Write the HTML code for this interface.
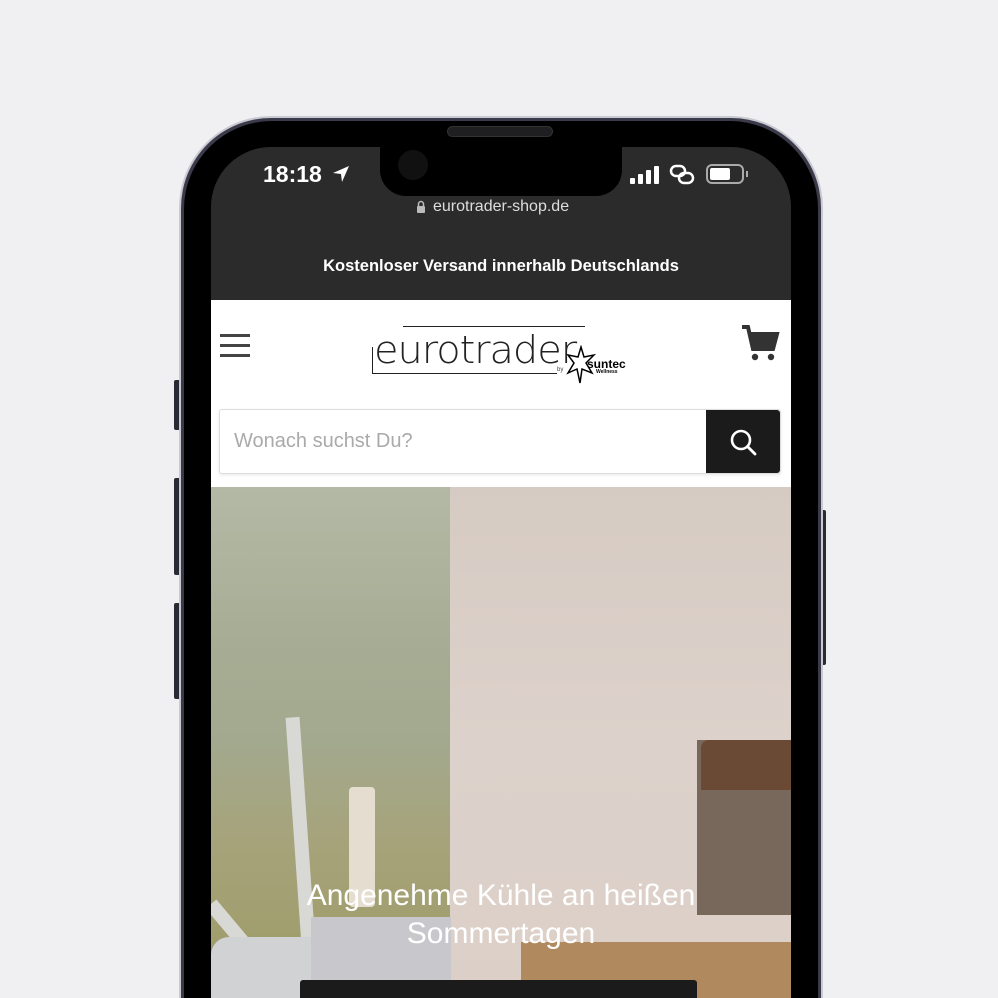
<!DOCTYPE html>
<html><head><meta charset="utf-8"><style>
*{margin:0;padding:0;box-sizing:border-box}
html,body{width:998px;height:998px;overflow:hidden}
body{background:#f0f0f2;font-family:"Liberation Sans",sans-serif}
#wrap{position:relative;width:998px;height:998px;overflow:hidden;background:#f0f0f2}
.abs{position:absolute}
</style></head><body><div id="wrap">
<div class="abs" style="left:174px;top:380px;width:8px;height:50px;background:#2a2a35;border-radius:2px"></div>
<div class="abs" style="left:174px;top:478px;width:8px;height:97px;background:#2a2a35;border-radius:2px"></div>
<div class="abs" style="left:174px;top:603px;width:8px;height:96px;background:#2a2a35;border-radius:2px"></div>
<div class="abs" style="left:818px;top:510px;width:8px;height:155px;background:#2a2a35;border-radius:2px"></div>
<div class="abs" style="left:179px;top:116px;width:644px;height:882px;border-radius:92px 92px 0 0;background:#3a3a4a;border:2px solid #c9c9d2;border-bottom:none"></div>
<div class="abs" style="left:184px;top:121px;width:634px;height:877px;border-radius:88px 88px 0 0;background:#000"></div>
<div class="abs" style="left:447px;top:126px;width:106px;height:11px;border-radius:6px;background:#1f1f22;border:1px solid #333"></div>
<div class="abs" style="left:211px;top:147px;width:580px;height:851px;border-radius:60px 60px 0 0;background:#2b2b2b;overflow:hidden">
  <div class="abs" style="left:169px;top:-2px;width:242px;height:51px;background:#000;border-radius:0 0 26px 26px"></div>
  <div class="abs" style="left:187px;top:3px;width:30px;height:30px;border-radius:50%;background:#111"></div>
  <div class="abs" style="left:52px;top:14px;color:#fff;font-size:23px;font-weight:bold">18:18</div>
  <svg class="abs" style="left:120px;top:17px" width="20" height="20" viewBox="0 0 20 20"><path d="M18 2 L2 9 L10 10 L11 18 Z" fill="#fff"/></svg>
  <svg class="abs" style="left:418px;top:18px" width="32" height="20" viewBox="0 0 32 20"><rect x="1" y="13" width="5" height="6" rx="1" fill="#fff"/><rect x="9" y="9" width="5" height="10" rx="1" fill="#fff"/><rect x="17" y="5" width="5" height="14" rx="1" fill="#fff"/><rect x="25" y="1" width="5" height="18" rx="1" fill="#fff"/></svg>
  <svg class="abs" style="left:457px;top:16px" width="28" height="24" viewBox="0 0 28 24"><rect x="3" y="3" width="14" height="10" rx="5" fill="none" stroke="#fff" stroke-width="2.5"/><rect x="11" y="10" width="14" height="10" rx="5" fill="none" stroke="#fff" stroke-width="2.5"/></svg>
  <div class="abs" style="left:495px;top:17px;width:38px;height:20px;border:2px solid #aaa;border-radius:6px"></div>
  <div class="abs" style="left:499px;top:21px;width:20px;height:12px;background:#fff;border-radius:2px"></div>
  <div class="abs" style="left:535px;top:24px;width:2px;height:6px;background:#aaa"></div>
  <svg class="abs" style="left:205px;top:53px" width="10" height="14" viewBox="0 0 10 14"><path d="M2.5 6V4a2.5 2.5 0 0 1 5 0v2" fill="none" stroke="#bbb" stroke-width="1.5"/><rect x="1" y="6" width="8" height="7" rx="1" fill="#bbb"/></svg>
  <div class="abs" style="left:222px;top:51px;color:#ddd;font-size:16px">eurotrader-shop.de</div>
  <div class="abs" style="left:0;top:110px;width:580px;text-align:center;color:#fff;font-size:16.5px;font-weight:bold">Kostenloser Versand innerhalb Deutschlands</div>
  <div class="abs" style="left:0;top:153px;width:580px;height:187px;background:#fff"></div>
  <div class="abs" style="left:9px;top:187px;width:30px;height:3px;background:#444"></div>
  <div class="abs" style="left:9px;top:197px;width:30px;height:3px;background:#444"></div>
  <div class="abs" style="left:9px;top:207px;width:30px;height:3px;background:#444"></div>
  <div class="abs" style="left:192px;top:179px;width:182px;height:1px;background:#222"></div>
  <div class="abs" style="left:161px;top:200px;width:1px;height:27px;background:#222"></div>
  <div class="abs" style="left:161px;top:226px;width:185px;height:1px;background:#222"></div>
  <div class="abs" style="left:163px;top:181px;font-family:'DejaVu Sans',sans-serif;font-weight:200;font-size:38px;color:#222;letter-spacing:-1px;transform:scaleX(1.05);transform-origin:left">eurotrader</div>
  <div class="abs" style="left:346px;top:220px;font-size:6px;color:#444">by</div>
  <div class="abs" style="left:376px;top:210px;font-size:12px;font-weight:bold;color:#000">suntec</div>
  <div class="abs" style="left:385px;top:222px;font-size:5px;font-weight:bold;color:#000">Wellness</div>
  <svg class="abs" style="left:355px;top:198px" width="30" height="40" viewBox="0 0 30 40"><path d="M15 2 L18 12 L28 10 L20 18 L26 28 L16 24 L14 38 L11 24 L2 28 L8 18 L2 10 L12 12 Z" fill="none" stroke="#000" stroke-width="1.5"/></svg>
  <svg class="abs" style="left:529px;top:177px" width="40" height="40" viewBox="0 0 40 40"><path d="M2 3h6l5 22h20l4-15H11" fill="none" stroke="#333" stroke-width="4"/><path d="M11 10h26l-4 15H13z" fill="#333"/><circle cx="15" cy="33" r="3.2" fill="#333"/><circle cx="31" cy="33" r="3.2" fill="#333"/></svg>
  <div class="abs" style="left:8px;top:262px;width:562px;height:65px;border:1px solid #ddd;border-radius:3px;background:#fff;box-shadow:0 1px 3px rgba(0,0,0,.1)"></div>
  <div class="abs" style="left:23px;top:283px;color:#aaa;font-size:20px">Wonach suchst Du?</div>
  <div class="abs" style="left:495px;top:263px;width:74px;height:63px;background:#1b1b1b;border-radius:0 3px 3px 0"></div>
  <svg class="abs" style="left:517px;top:280px" width="30" height="30" viewBox="0 0 30 30"><circle cx="13" cy="13" r="9" fill="none" stroke="#fff" stroke-width="2.6"/><path d="M19.5 19.5L27 27" stroke="#fff" stroke-width="2.8" stroke-linecap="round"/></svg>
  <div class="abs" style="left:0;top:340px;width:580px;height:511px;overflow:hidden;background:#d9cec6">
    <div class="abs" style="left:239px;top:0;width:341px;height:511px;background:linear-gradient(180deg,#d6cbc3,#ddd2cb 50%,#dbcfc8)"></div>
    <div class="abs" style="left:0;top:0;width:239px;height:511px;background:linear-gradient(180deg,#b4b9a6 0%,#a7ad94 30%,#a3a98e 50%,#a6a37a 70%,#9d9a66 100%)"></div>
    <div class="abs" style="left:85px;top:230px;width:14px;height:300px;background:#d8d8d4;transform:rotate(-4deg)"></div>
    <div class="abs" style="left:0;top:410px;width:120px;height:14px;background:#d8d8d4;transform:rotate(50deg);transform-origin:left"></div>
    <div class="abs" style="left:138px;top:300px;width:26px;height:120px;background:#e4ddd0;border-radius:4px"></div>
    <div class="abs" style="left:0;top:450px;width:125px;height:61px;background:#d0d2d3;border-radius:18px 18px 0 0"></div>
    <div class="abs" style="left:100px;top:430px;width:140px;height:81px;background:#c8c8cc"></div>
    <div class="abs" style="left:486px;top:253px;width:94px;height:175px;background:#78685c"></div>
    <div class="abs" style="left:490px;top:253px;width:90px;height:50px;background:#6a4a34;border-radius:8px 0 0 0"></div>
    <div class="abs" style="left:310px;top:455px;width:270px;height:56px;background:#b08a5e"></div>
    <div class="abs" style="left:0;top:390px;width:580px;text-align:center;color:#fff;font-family:'Liberation Sans',sans-serif;font-size:30px;line-height:38px;font-weight:300">Angenehme Kühle an heißen<br>Sommertagen</div>
    <div class="abs" style="left:89px;top:493px;width:397px;height:18px;background:#1b1b1b;border-radius:3px 3px 0 0"></div>
  </div>
</div>
</div></body></html>
